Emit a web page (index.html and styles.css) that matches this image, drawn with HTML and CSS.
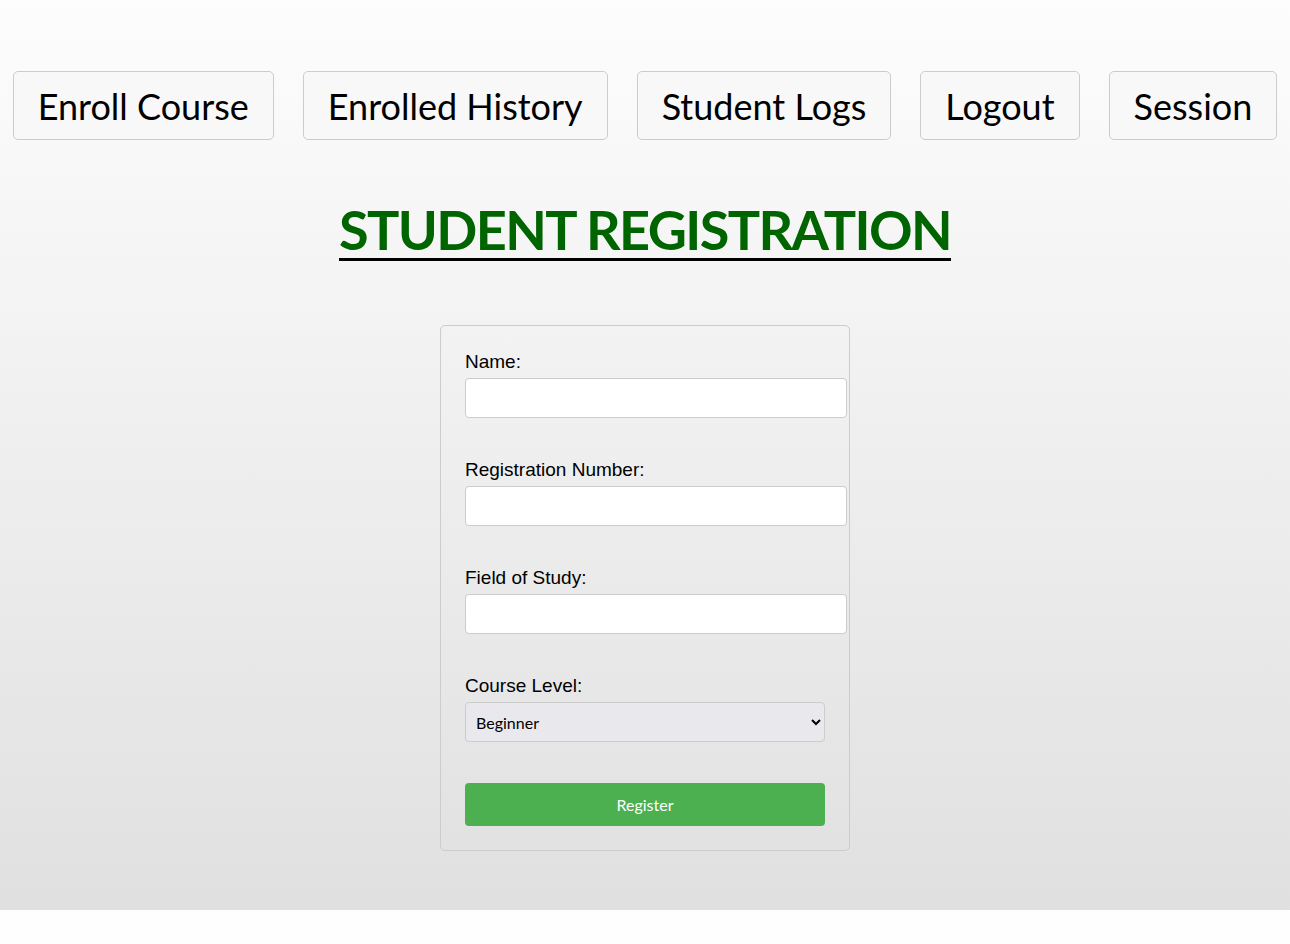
FILE: index.html
```html
<!DOCTYPE html>
<html lang="en">
<head>
<meta charset="utf-8">
<title>Student Registration</title>
<link rel="stylesheet" href="styles.css">
</head>
<body>
<div class="page">
  <nav class="nav">
    <button class="nav-btn" type="button">Enroll Course</button>
    <button class="nav-btn" type="button">Enrolled History</button>
    <button class="nav-btn" type="button">Student Logs</button>
    <button class="nav-btn" type="button">Logout</button>
    <button class="nav-btn" type="button">Session</button>
  </nav>
  <div class="title-wrap">
    <h1 class="title">STUDENT REGISTRATION</h1>
  </div>
  <form class="card">
    <label class="label" for="name">Name:</label>
    <input class="input" id="name" type="text">
    <label class="label" for="reg">Registration Number:</label>
    <input class="input" id="reg" type="text">
    <label class="label" for="field">Field of Study:</label>
    <input class="input" id="field" type="text">
    <label class="label" for="level">Course Level:</label>
    <select class="select" id="level">
      <option>Beginner</option>
      <option>Intermediate</option>
      <option>Advanced</option>
    </select>
    <button class="submit" type="button">Register</button>
  </form>
</div>
</body>
</html>
```
FILE: styles.css
```css
html, body {
  margin: 0;
  padding: 0;
  background: #fefefe;
}
.page {
  height: 910px;
  box-sizing: border-box;
  padding-top: 71px;
  background: linear-gradient(to bottom, #fdfdfd 0%, #e0e0e0 100%);
  font-family: "Liberation Sans", Arial, sans-serif;
}
.nav {
  display: flex;
  justify-content: center;
  gap: 29px;
}
.nav-btn {
  flex: 0 0 auto;
  white-space: nowrap;
  height: 69px;
  box-sizing: border-box;
  padding: 0 24px;
  font-family: Lato, "Noto Sans", sans-serif;
  font-size: 36px;
  color: #000;
  background: #f8f8f8;
  border: 1px solid #cccccc;
  border-radius: 5px;
}
.title-wrap {
  text-align: center;
  margin-top: 62px;
}
.title {
  display: inline-block;
  margin: 0;
  font-family: Lato, "Open Sans", sans-serif;
  font-weight: 700;
  font-size: 54px;
  line-height: 56px;
  letter-spacing: -1.6px;
  color: #006400;
  border-bottom: 3px solid #000;
}
.card {
  width: 410px;
  box-sizing: border-box;
  margin: 64px auto 0;
  padding: 25px 24px 24px;
  border: 1px solid #cccccc;
  border-radius: 5px;
  display: flex;
  flex-direction: column;
  align-items: flex-start;
}
.label {
  font-size: 19px;
  line-height: 22px;
  color: #000;
  margin-bottom: 5px;
}
.input {
  width: 100%;
  box-sizing: content-box;
  padding: 0 10px;
  height: 38px;
  border: 1px solid #cccccc;
  border-radius: 4px;
  background: #fff;
  margin: 0 0 41px;
}
.select {
  width: 100%;
  height: 40px;
  box-sizing: border-box;
  padding: 0 6px;
  font-family: Lato, "Noto Sans", sans-serif;
  font-size: 16px;
  color: #000;
  background-color: #e9e9ed;
  border: 1px solid #cccccc;
  border-radius: 4px;
  margin: 0 0 41px;
}
.submit {
  width: 100%;
  height: 43px;
  font-family: Lato, "Noto Sans", sans-serif;
  font-size: 16px;
  color: #fff;
  background: #4caf50;
  border: none;
  border-radius: 4px;
}
```
